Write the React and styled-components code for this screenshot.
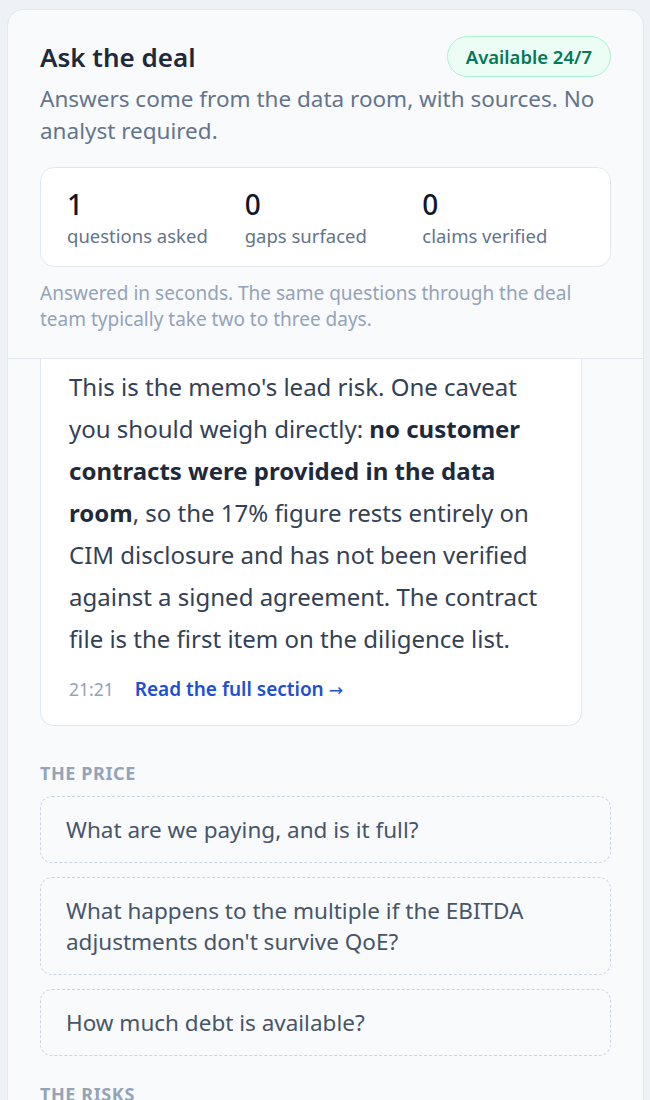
import React from 'react';
import styled, { createGlobalStyle } from 'styled-components';

const GlobalStyle = createGlobalStyle`
  * { box-sizing: border-box; }
  body {
    margin: 0;
    background: #eef2f6;
    font-family: "Noto Sans", "Open Sans", sans-serif;
    color: #334155;
  }
`;

const Page = styled.div`
  padding: 9px 6px 0 7px;
  height: 1100px;
  overflow: hidden;
`;

const Panel = styled.section`
  background: #f8fafc;
  border: 1.5px solid #e2e8f0;
  border-radius: 16px;
  overflow: hidden;
`;

const Header = styled.header`
  padding: 26px 32px 26px;
  border-bottom: 1.5px solid #e2e8f0;
`;

const TitleRow = styled.div`
  display: flex;
  align-items: center;
  justify-content: space-between;
`;

const Title = styled.h1`
  margin: 0;
  font-size: 26px;
  line-height: 36px;
  font-weight: 600;
  color: #1e293b;
`;

const Badge = styled.span`
  display: inline-flex;
  align-items: center;
  height: 41px;
  padding: 0 18px;
  border-radius: 999px;
  border: 1.5px solid #a7f3d0;
  background: #ecfdf5;
  color: #047857;
  font-size: 18.5px;
  font-weight: 600;
`;

const Subtitle = styled.p`
  margin: 6px 0 0;
  font-size: 22.5px;
  line-height: 32px;
  color: #64748b;
`;

const Stats = styled.div`
  margin-top: 20px;
  display: grid;
  grid-template-columns: repeat(3, 1fr);
  gap: 16px;
  padding: 20px 26px 17px;
  background: #ffffff;
  border: 1.5px solid #e2e8f0;
  border-radius: 14px;
`;

const Stat = styled.div`
  display: flex;
  flex-direction: column;
  gap: 3px;
`;

const StatValue = styled.span`
  font-size: 28px;
  line-height: 32px;
  font-weight: 500;
  color: #0f172a;
`;

const StatLabel = styled.span`
  font-size: 18.5px;
  line-height: 26px;
  color: #64748b;
`;

const Footnote = styled.p`
  margin: 13px 0 0;
  font-size: 19px;
  line-height: 26px;
  color: #94a3b8;
`;

const Body = styled.div`
  display: flex;
  flex-direction: column;
  padding: 0 32px;
`;

const Bubble = styled.div`
  width: 95%;
  margin-bottom: 9px;
  background: #ffffff;
  border: 1.5px solid #e2e8f0;
  border-radius: 14px;
  padding: 20px 28px 22px;
  ${(p) =>
    p.$clipped &&
    `
    border-top: none;
    border-top-left-radius: 0;
    border-top-right-radius: 0;
    padding-top: 7px;
  `}
`;

const BubbleText = styled.p`
  margin: 0;
  font-size: 24px;
  line-height: 42px;
  color: #334155;

  strong {
    font-weight: 700;
    color: #1e293b;
  }
`;

const BubbleFooter = styled.div`
  margin-top: 16px;
  display: flex;
  align-items: baseline;
  gap: 21px;
  line-height: 26px;
`;

const Time = styled.span`
  font-size: 17.5px;
  color: #94a3b8;
`;

const SourceLink = styled.a`
  font-size: 19px;
  color: #1d4ed8;
  font-weight: 600;
  text-decoration: none;
`;

const Arrow = styled.span`
  font-family: "DejaVu Sans", sans-serif;
  font-weight: 400;
  font-size: 17px;
`;

const Group = styled.div`
  margin-top: 27px;
`;

const GroupLabel = styled.h2`
  margin: 0 0 12px;
  font-size: 18px;
  line-height: 22px;
  font-weight: 700;
  letter-spacing: 0.6px;
  text-transform: uppercase;
  color: #94a3b8;
`;

const Suggestions = styled.div`
  display: flex;
  flex-direction: column;
  gap: 14px;
`;

const Suggestion = styled.button`
  display: block;
  width: 100%;
  text-align: left;
  padding: 17px 25px;
  background: transparent;
  border: 1.5px dashed #cbd5e1;
  border-radius: 12px;
  font-family: inherit;
  font-size: 22.5px;
  line-height: 31px;
  color: #475569;
  cursor: pointer;
`;

const stats = [
  { value: 1, label: 'questions asked' },
  { value: 0, label: 'gaps surfaced' },
  { value: 0, label: 'claims verified' },
];

const groups = [
  {
    title: 'The price',
    questions: [
      'What are we paying, and is it full?',
      "What happens to the multiple if the EBITDA adjustments don't survive QoE?",
      'How much debt is available?',
    ],
  },
  {
    title: 'The risks',
    questions: ['What is the customer concentration?'],
  },
];

export default function App() {
  return (
    <>
      <GlobalStyle />
      <Page>
        <Panel>
          <Header>
            <TitleRow>
              <Title>Ask the deal</Title>
              <Badge>Available 24/7</Badge>
            </TitleRow>
            <Subtitle>Answers come from the data room, with sources. No analyst required.</Subtitle>
            <Stats>
              {stats.map((s) => (
                <Stat key={s.label}>
                  <StatValue>{s.value}</StatValue>
                  <StatLabel>{s.label}</StatLabel>
                </Stat>
              ))}
            </Stats>
            <Footnote>
              Answered in seconds. The same questions through the deal team typically take two to three days.
            </Footnote>
          </Header>
          <Body>
            <Bubble $clipped>
              <BubbleText>
                This is the memo's lead risk. One caveat you should weigh directly:{' '}
                <strong>no customer contracts were provided in the data room</strong>, so the 17% figure
                rests entirely on CIM disclosure and has not been verified against a signed agreement. The
                contract file is the first item on the diligence list.
              </BubbleText>
              <BubbleFooter>
                <Time>21:21</Time>
                <SourceLink href="#">
                  Read the full section <Arrow>→</Arrow>
                </SourceLink>
              </BubbleFooter>
            </Bubble>
            {groups.map((g) => (
              <Group key={g.title}>
                <GroupLabel>{g.title}</GroupLabel>
                <Suggestions>
                  {g.questions.map((q) => (
                    <Suggestion key={q}>{q}</Suggestion>
                  ))}
                </Suggestions>
              </Group>
            ))}
          </Body>
        </Panel>
      </Page>
    </>
  );
}
